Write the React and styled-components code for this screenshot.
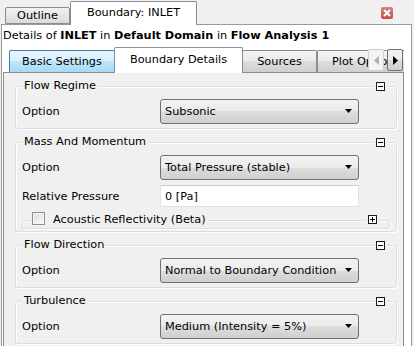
import React from 'react';
import styled, { createGlobalStyle } from 'styled-components';

const Global = createGlobalStyle`
  html, body { margin: 0; padding: 0; background: #f0f0f0; }
  body { font-family: "DejaVu Sans", Verdana, sans-serif; font-size: 11.3px; color: #000; }
  * { box-sizing: border-box; }
`;

const Root = styled.div`
  width: 414px;
  height: 346px;
  overflow: hidden;
  background: #f0f0f0;
  display: flex;
  flex-direction: column;
`;

const TopBar = styled.div`
  flex: none;
  height: 24px;
  display: flex;
  align-items: flex-end;
  padding-left: 5px;
  position: relative;
  z-index: 1;
`;

const TopTab = styled.div`
  height: ${p => (p.$active ? 24 : 17)}px;
  width: ${p => p.$w}px;
  margin-bottom: ${p => (p.$active ? -1 : 0)}px;
  display: flex;
  align-items: center;
  justify-content: center;
  border: 1px solid #898c95;
  border-bottom: ${p => (p.$active ? 'none' : '1px solid #898c95')};
  border-radius: 2px 2px 0 0;
  background: ${p => (p.$active ? '#fff' : 'linear-gradient(#f2f2f2, #dbdbdb)')};
  padding-bottom: ${p => (p.$active ? 2 : 0)}px;
  white-space: nowrap;
`;

const CloseBtn = styled.div`
  align-self: flex-start;
  margin: 7px 21px 0 auto;
  width: 12px;
  height: 12px;
  border-radius: 2px;
  background: linear-gradient(#d8837e, #c0504d);
  display: flex;
  align-items: center;
  justify-content: center;
`;

const Panel = styled.div`
  flex: 1;
  width: 411px;
  margin-left: 1px;
  border: 1px solid #9a9a9a;
  border-bottom: none;
  background: #fff;
  display: flex;
  flex-direction: column;
  min-height: 0;
`;

const Details = styled.div`
  flex: none;
  height: 22px;
  padding: 3px 0 0 1px;
  line-height: 16px;
  white-space: nowrap;
  b { font-weight: bold; }
`;

const TabWidget = styled.div`
  flex: 1;
  margin: 0 7px 0 1px;
  display: flex;
  flex-direction: column;
  min-height: 0;
`;

const TabBar = styled.div`
  flex: none;
  position: relative;
  z-index: 1;
  height: 26px;
  display: flex;
  align-items: flex-start;
  padding-left: 6px;
  overflow: hidden;
`;

const Tab = styled.div`
  flex: none;
  width: ${p => p.$w}px;
  margin-left: ${p => p.$ml || 0}px;
  margin-top: ${p => (p.$active ? 0 : 3)}px;
  height: ${p => (p.$active ? 26 : 22)}px;
  display: flex;
  align-items: center;
  justify-content: ${p => (p.$start ? 'flex-start' : 'center')};
  padding-left: ${p => (p.$start ? 14 : 0)}px;
  padding-bottom: ${p => (p.$active ? 2 : 0)}px;
  white-space: nowrap;
  overflow: hidden;
  border: 1px solid ${p => (p.$hover ? '#3c7fb1' : '#898c95')};
  border-bottom: none;
  border-radius: 2px 2px 0 0;
  background: ${p =>
    p.$active
      ? '#fff'
      : p.$hover
      ? 'linear-gradient(#eaf6fd 0%, #d9f0fc 50%, #bee6fd 50%, #a7d9f5 100%)'
      : 'linear-gradient(#f2f2f2 0%, #ebebeb 50%, #dddddd 50%, #cfcfcf 100%)'};
  position: relative;
  z-index: ${p => (p.$active ? 2 : 1)};
`;

const ScrollBtn = styled.div`
  position: absolute;
  top: 2px;
  left: ${p => p.$left}px;
  width: 16px;
  height: 22px;
  z-index: 3;
  border: 1px solid ${p => (p.$disabled ? '#d0d0d0' : '#707070')};
  border-radius: 2px;
  background: ${p => (p.$disabled ? '#f4f4f4' : 'linear-gradient(#f2f2f2 0%, #ebebeb 50%, #dddddd 50%, #cfcfcf 100%)')};
  display: flex;
  align-items: center;
  justify-content: center;
`;

const Pane = styled.div`
  flex: 1;
  margin-top: -1px;
  border: 1px solid #898c95;
  border-bottom: none;
  background: #f0f0f0;
  padding: 13px 6px 0 11px;
  display: flex;
  flex-direction: column;
  min-height: 0;
`;

const Group = styled.div`
  flex: none;
  border: 1px solid #d5dfe5;
  border-radius: 3px;
  box-shadow: inset 1px 1px 0 #fff, 1px 1px 0 #fff;
  padding: 0 6px ${p => p.$pb ?? 4}px;
  display: flex;
  flex-direction: column;
  & + & { margin-top: 13px; }
`;

const GroupHeader = styled.div`
  height: 16px;
  margin: -9px -6px 0;
  padding: 0 9px 0 6px;
  display: flex;
  align-items: center;
  justify-content: space-between;
`;

const Title = styled.span`
  background: #f0f0f0;
  padding: 0 2px;
  white-space: nowrap;
  line-height: 16px;
`;

const IconWrap = styled.span`
  background: #f0f0f0;
  padding: 0 2px;
  display: flex;
  align-items: center;
`;

const Row = styled.div`
  margin-top: 5px;
  height: ${p => p.$h || 25}px;
  display: flex;
  align-items: center;
`;

const Label = styled.div`
  width: 138px;
  flex: none;
  white-space: nowrap;
`;

const Combo = styled.div`
  width: 199px;
  height: 100%;
  border: 1px solid #707070;
  border-radius: 3px;
  background: linear-gradient(#f2f2f2 0%, #ebebeb 50%, #dddddd 50%, #cfcfcf 100%);
  display: flex;
  align-items: center;
  justify-content: space-between;
  padding: 0 5px 0 4px;
  white-space: nowrap;
`;

const Input = styled.div`
  width: 199px;
  height: 100%;
  border: 1px solid #e0e2e8;
  border-top-color: #c9ccd3;
  background: #fff;
  display: flex;
  align-items: center;
  padding-left: 4px;
`;

const SubGroup = styled.div`
  margin-top: 13px;
  border: 1px solid #d5dfe5;
  border-radius: 3px;
  box-shadow: inset 1px 1px 0 #fff, 1px 1px 0 #fff;
  display: flex;
  flex-direction: column;
`;

const SubHeader = styled.div`
  height: 15px;
  margin: -9px 0 1px;
  padding: 0 10px 0 7px;
  display: flex;
  align-items: center;
  justify-content: space-between;
`;

const CheckWrap = styled.span`
  background: #f0f0f0;
  padding: 0 2px;
  display: flex;
  align-items: center;
  gap: 8px;
  white-space: nowrap;
`;

const Check = styled.span`
  width: 13px;
  height: 13px;
  border: 1px solid #8e8f8f;
  background: linear-gradient(135deg, #dcdcdc, #fbfbfb);
  box-shadow: inset 0 0 0 1px #f4f4f4;
  margin-top: -2px;
`;

const Arrow = () => (
  <svg width="8" height="5" viewBox="0 0 8 5">
    <path d="M0 0H7L3.5 4Z" fill="#000" />
  </svg>
);

const BoxIcon = ({ plus }) => (
  <svg width="9" height="9" viewBox="0 0 9 9">
    <rect x="0.5" y="0.5" width="8" height="8" fill="#fff" stroke="#1a1a1a" />
    <path d="M2 4.5H7" stroke="#000" />
    {plus && <path d="M4.5 2V7" stroke="#000" />}
  </svg>
);

const OptionRow = ({ label, value }) => (
  <Row>
    <Label>{label}</Label>
    <Combo>
      <span>{value}</span>
      <Arrow />
    </Combo>
  </Row>
);

const GroupBox = ({ title, children, pb }) => (
  <Group $pb={pb}>
    <GroupHeader>
      <Title>{title}</Title>
      <IconWrap>
        <BoxIcon />
      </IconWrap>
    </GroupHeader>
    {children}
  </Group>
);

export default function App() {
  return (
    <Root>
      <Global />
      <TopBar>
        <TopTab $w={65}>Outline</TopTab>
        <TopTab $w={127} $active>Boundary: INLET</TopTab>
        <CloseBtn>
          <svg width="8" height="8" viewBox="0 0 8 8">
            <path d="M1 1L7 7M7 1L1 7" stroke="#fff" strokeWidth="2" />
          </svg>
        </CloseBtn>
      </TopBar>
      <Panel>
        <Details>
          Details of <b>INLET</b> in <b>Default Domain</b> in <b>Flow Analysis 1</b>
        </Details>
        <TabWidget>
          <TabBar>
            <Tab $w={106} $hover>Basic Settings</Tab>
            <Tab $w={129} $ml={-1} $active>Boundary Details</Tab>
            <Tab $w={75} $ml={-1}>Sources</Tab>
            <Tab $w={90} $start>Plot Options</Tab>
            <ScrollBtn $left={365} $disabled>
              <svg width="5" height="9" viewBox="0 0 5 9">
                <path d="M5 0V9L0 4.5Z" fill="#b0b0b0" />
              </svg>
            </ScrollBtn>
            <ScrollBtn $left={384}>
              <svg width="5" height="9" viewBox="0 0 5 9">
                <path d="M0 0V9L5 4.5Z" fill="#000" />
              </svg>
            </ScrollBtn>
          </TabBar>
          <Pane>
            <GroupBox title="Flow Regime">
              <OptionRow label="Option" value="Subsonic" />
            </GroupBox>
            <GroupBox title="Mass And Momentum" pb={2}>
              <OptionRow label="Option" value="Total Pressure (stable)" />
              <Row $h={22}>
                <Label>Relative Pressure</Label>
                <Input>0 [Pa]</Input>
              </Row>
              <SubGroup>
                <SubHeader>
                  <CheckWrap>
                    <Check />
                    <span>Acoustic Reflectivity (Beta)</span>
                  </CheckWrap>
                  <IconWrap>
                    <BoxIcon plus />
                  </IconWrap>
                </SubHeader>
              </SubGroup>
            </GroupBox>
            <GroupBox title="Flow Direction">
              <OptionRow label="Option" value="Normal to Boundary Condition" />
            </GroupBox>
            <GroupBox title="Turbulence">
              <OptionRow label="Option" value="Medium (Intensity = 5%)" />
            </GroupBox>
          </Pane>
        </TabWidget>
      </Panel>
    </Root>
  );
}
